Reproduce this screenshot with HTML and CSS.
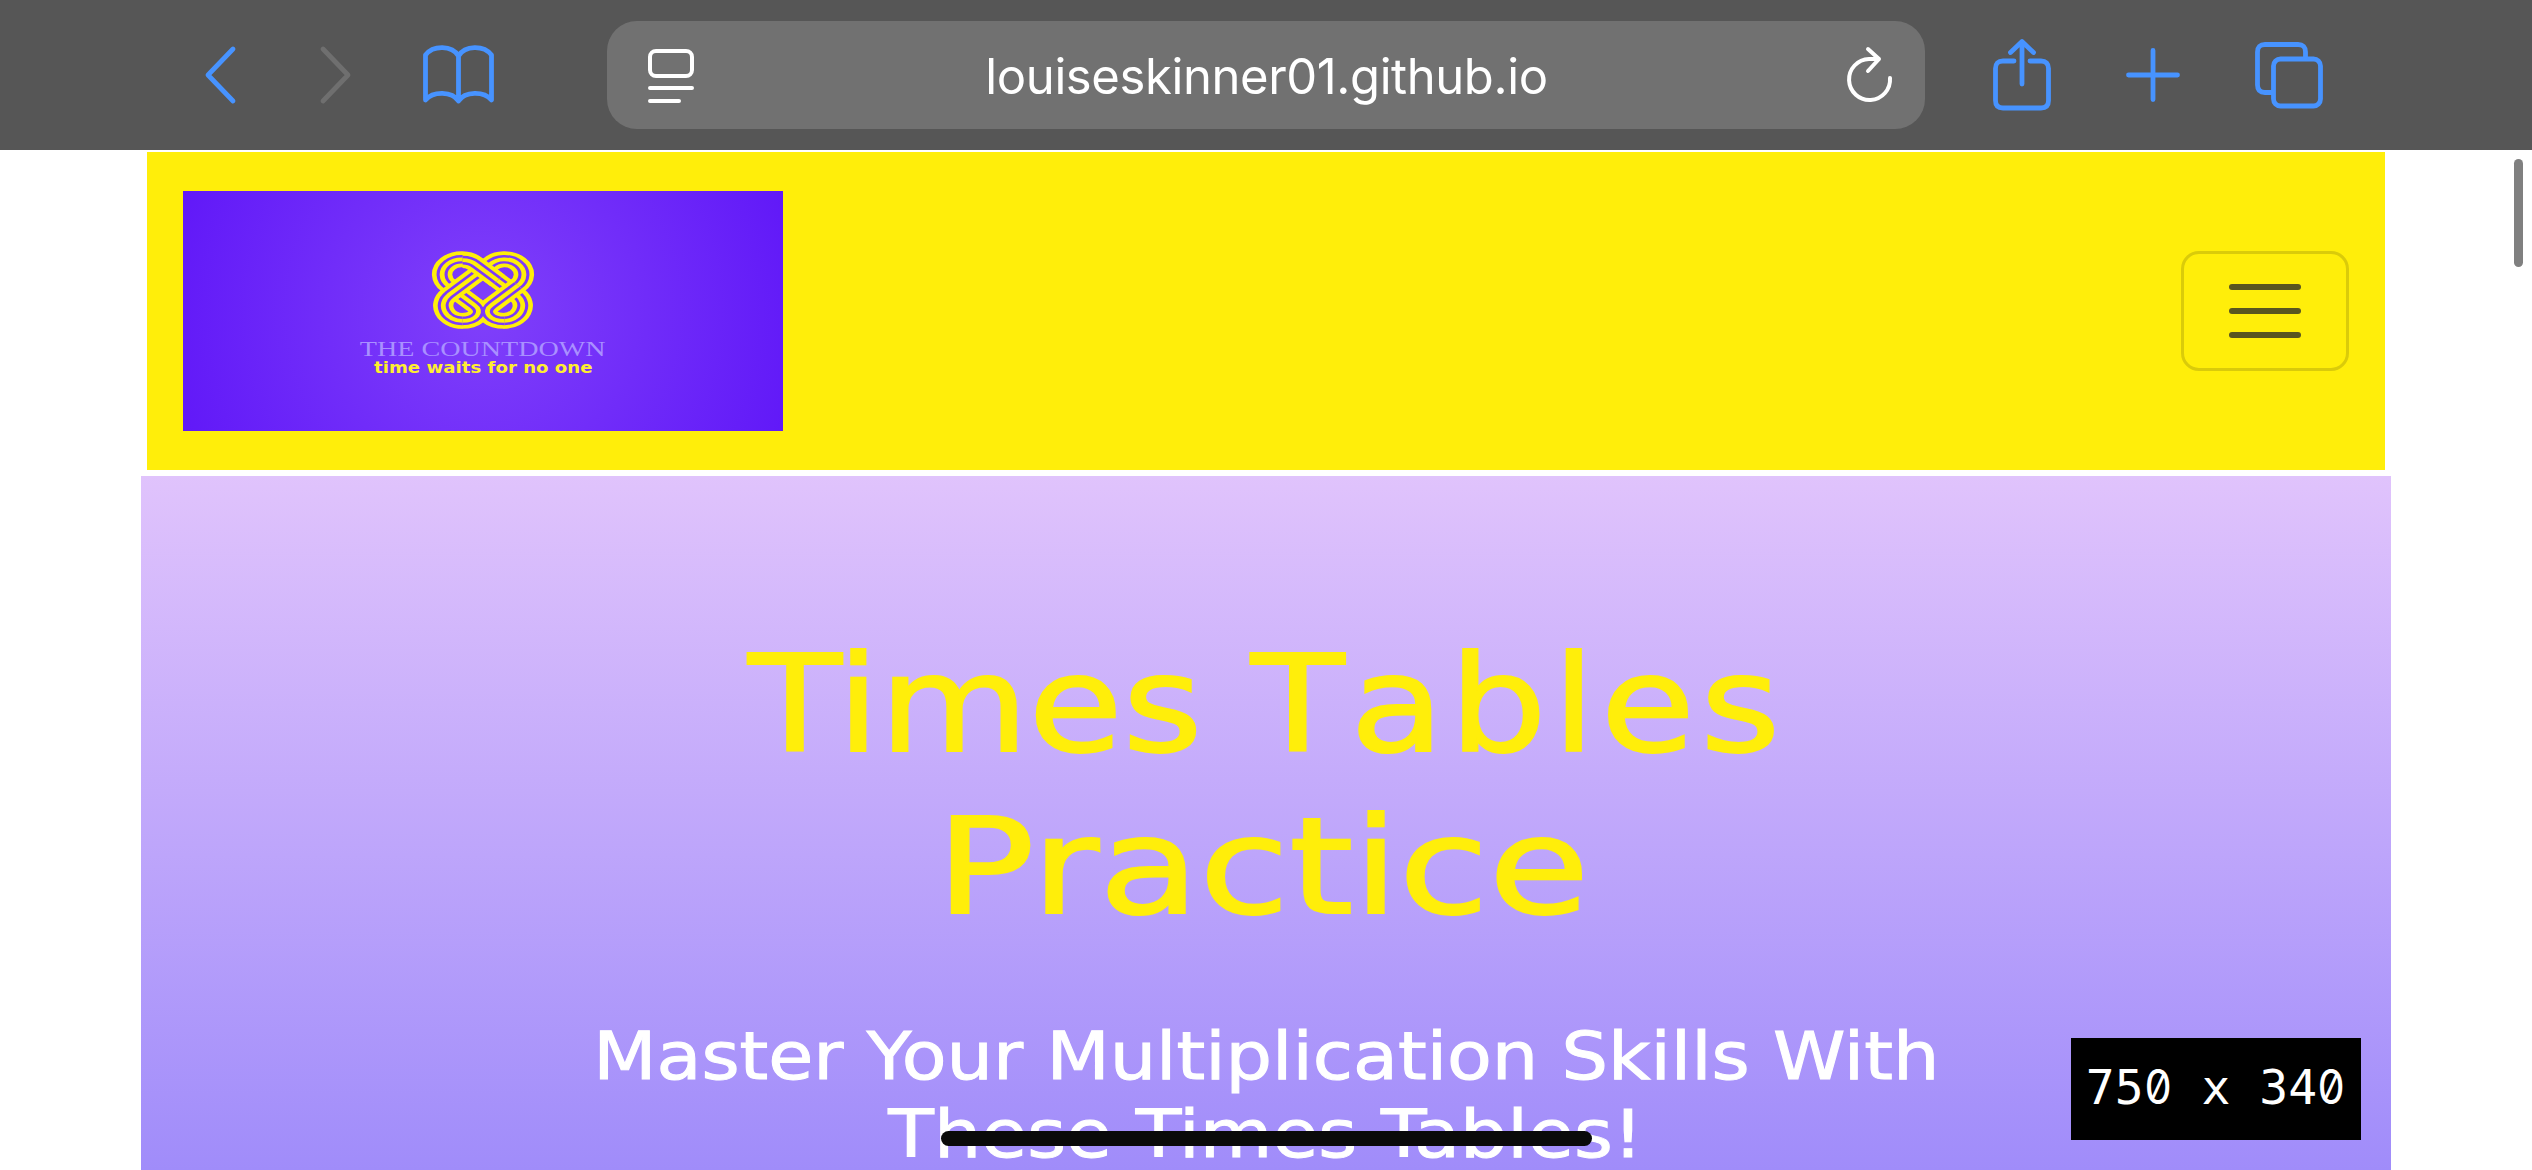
FILE: index.html
```html
<!DOCTYPE html>
<html lang="en">
<head>
<meta charset="utf-8">
<title>Times Tables Practice</title>
<link rel="stylesheet" href="styles.css">
</head>
<body>
<header class="toolbar">
  <div class="group group-left">
    <svg class="icon-back" width="31" height="58" viewBox="0 0 31 58"><path d="M28 3 3 29l25 26"/></svg>
    <svg class="icon-forward" width="31" height="58" viewBox="0 0 31 58"><path d="M3 3l25 26L3 55"/></svg>
    <svg class="icon-book" width="71" height="60" viewBox="0 0 71 60"><path d="M35.500 11v45M35.500 11C29 0 10 0 2.500 10V55C10 46 29 46 35.500 56 42 46 61 46 68.500 55V10C61 0 42 0 35.500 11"/></svg>
  </div>
  <div class="address">
    <svg width="46" height="56" viewBox="0 0 46 56"><rect x="2" y="4" width="42" height="25" rx="6"/><path d="M2 41h42M2 54h29"/></svg>
    <span class="url">louiseskinner01.github.io</span>
    <svg class="icon-reload" width="46" height="56" viewBox="0 0 46 56"><path d="M43 31A20.500 20.500 0 1 1 22 12h10M21 2l11 10-11 12"/></svg>
  </div>
  <div class="group group-right">
    <svg width="58" height="72" viewBox="0 0 58 72"><path d="M21 22H10q-7.500 0-7.500 7.500v32q0 7.500 7.500 7.500h38q7.500 0 7.500-7.500v-32q0-7.500-7.500-7.500H37M29 45V3M17.500 13.500 29 2.500l11.500 11"/></svg>
    <svg width="54" height="54" viewBox="0 0 54 54"><path d="M27 2.500v49M2.500 27h49"/></svg>
    <svg width="68" height="67" viewBox="0 0 68 67"><rect x="18.500" y="17" width="47" height="47" rx="7"/><path d="M50.500 16V10q0-7.500-7.500-7.500H10Q2.500 2.500 2.500 10v33q0 7.500 7.500 7.500h7"/></svg>
  </div>
</header>
<main class="page">
  <nav class="navbar">
    <a class="brand">
      <svg class="knot" width="102" height="79" viewBox="-1.500 -2 105 104" preserveAspectRatio="none">
        <defs>
          <clipPath id="left"><path d="M-2-2H51V102H-2z"/></clipPath>
          <clipPath id="right"><path d="M51-2H104V102H51z"/></clipPath>
          <path id="a" d="M29 90C44 90 52 78 42 69L15.900 44.100"/>
          <path id="b" d="M15.900 44.100A20 20 0 1 1 44.100 15.900L86.100 55.900A20 20 0 0 1 72 90"/>
          <path id="c" d="M86.100 44.100A20 20 0 1 0 57.900 15.900L15.900 55.900A20 20 0 0 0 30 90"/>
          <path id="d" d="M73 90C58 90 50 78 60 69L87 43.200"/>
          <path id="e" d="M30 10A20 20 0 0 1 44.100 15.900L66 36.800"/>
        </defs>
        <g clip-path="url(#left)"><use href="#a" class="outer"/><use href="#a" class="gap"/><use href="#a" class="core"/></g>
        <g><use href="#b" class="outer"/><use href="#b" class="gap"/><use href="#b" class="core"/></g>
        <g><use href="#c" class="outer"/><use href="#c" class="gap"/><use href="#c" class="core"/></g>
        <g clip-path="url(#right)"><use href="#d" class="outer"/><use href="#d" class="gap"/><use href="#d" class="core"/></g>
        <g><use href="#e" class="outer"/><use href="#e" class="gap"/><use href="#e" class="core"/></g>
      </svg>
      <span class="brand-name">THE COUNTDOWN</span>
      <span class="brand-tag">time waits for no one</span>
    </a>
    <button class="toggler" aria-label="Menu"><i></i><i></i><i></i></button>
  </nav>
  <section class="hero">
    <h1><span class="t1">Times <span class="wide">Tables</span></span><span class="t2">Practice</span></h1>
    <h2><span class="s1">Master Your Multiplication Skills With</span><span class="s2">These Times Tables!</span></h2>
  </section>
</main>
<div class="scrollbar"></div>
<div class="size-badge">75<b>0</b> x 34<b>0</b></div>
<div class="home-indicator"></div>
</body>
</html>
```
FILE: styles.css
```css
* { box-sizing: border-box; }
body { margin: 0; width: 2532px; height: 1170px; overflow: hidden; background: #fff; position: relative; }
svg { display: block; fill: none; stroke: #4793ff; stroke-width: 4.8; stroke-linecap: round; stroke-linejoin: round; flex: none; overflow: visible; }
.toolbar { height: 150px; background: #565656; display: flex; align-items: center; padding: 0 209px 0 205px; }
.group { display: flex; align-items: center; }
.group-left { width: 402px; }
.icon-forward { margin-left: 84px; stroke: #6f6f6f; }
.icon-book { margin-left: 72px; }
.address { width: 1318px; height: 108px; border-radius: 30px; background: #717171; display: flex; align-items: center; justify-content: space-between; padding: 0 32px 0 41px; }
.address svg { stroke: #fff; stroke-width: 4; }
.url { font: 400 49px/60px Inter, sans-serif; letter-spacing: -0.4px; color: #fff; white-space: nowrap; padding: 3px 8px 0 0; }
.group-right { flex: 1; justify-content: space-between; padding-left: 68px; }
.page { width: 2250px; margin: 2px auto 0; }
.navbar { height: 318px; margin: 0 6px; padding: 0 36px; background: #ffee0a; display: flex; align-items: center; justify-content: space-between; }
.brand { width: 600px; height: 240px; display: flex; flex-direction: column; align-items: center; padding-top: 60px; background: radial-gradient(circle 320px at 50% 50%, #8040fa, #6119f8); }
.knot { stroke-linecap: butt; }
.knot .outer { stroke: #ffee0a; stroke-width: 21; }
.knot .gap { stroke: #7c3afa; stroke-width: 11.4; }
.knot .core { stroke: #ffee0a; stroke-width: 5; }
.brand-name { font: 20.5px/24px "Liberation Serif", serif; color: #a990ff; margin-top: 7px; white-space: nowrap; transform: scaleX(1.37); }
.brand-tag { font: bold 15px/18px "DejaVu Sans", sans-serif; color: #ffee30; margin-top: -2px; white-space: nowrap; transform: scaleX(1.21); }
.toggler { width: 168px; height: 120px; border: 3px solid #dacb0a; border-radius: 18px; background: none; padding: 0; display: flex; flex-direction: column; align-items: center; justify-content: center; gap: 18px; }
.toggler i { width: 72px; height: 6px; border-radius: 3px; background: #595620; }
.hero { height: 694px; margin-top: 6px; padding-top: 148px; background: linear-gradient(#e0c3fc, #a08cfa); text-align: center; font-family: "DejaVu Sans", sans-serif; }
h1, h2 { margin: 0; font-weight: 400; display: flex; flex-direction: column; align-items: center; white-space: nowrap; }
h1 { font-size: 133px; line-height: 162px; color: #ffee0a; -webkit-text-stroke: 2px #ffee0a; }
h2 { font-size: 66px; line-height: 78px; color: #fff; margin-top: 70px; -webkit-text-stroke: 1px #fff; }
.t1 { transform: translateX(1px) scaleX(1.15); }
.wide { letter-spacing: 5px; font-kerning: none; }
.t2 { transform: translateX(-3px) scaleX(1.23); }
.s1 { transform: scaleX(1.11); }
.s2 { transform: scaleX(1.131); }
.scrollbar { position: absolute; left: 2514px; top: 159px; width: 9px; height: 108px; border-radius: 5px; background: #808080; }
.size-badge { position: absolute; left: 2071px; top: 1038px; width: 290px; height: 102px; background: #000; color: #fff; font: 48px/98px "DejaVu Sans Mono", monospace; text-align: center; white-space: nowrap; }
.size-badge b { display: inline-block; width: 29px; font: 48px/98px Inter, sans-serif; font-feature-settings: "zero"; transform: translateX(-1px) scaleX(0.9); }
.home-indicator { position: absolute; left: 941px; top: 1131px; width: 651px; height: 15px; border-radius: 8px; background: #0a0a0a; }
```
